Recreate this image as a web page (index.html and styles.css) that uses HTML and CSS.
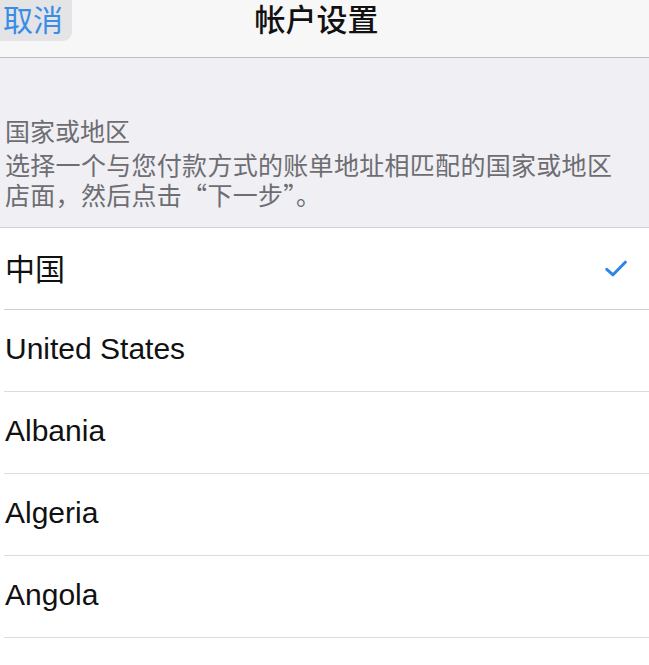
FILE: index.html
```html
<!DOCTYPE html>
<html lang="zh-CN">
<head>
  <meta charset="utf-8" />
  <title>帐户设置</title>
  <link rel="stylesheet" href="styles.css">
</head>
<body>
  <div id="main">
    <header class="nav-bar">
      <button class="nav-cancel">取消</button>
      <h1 class="nav-title">帐户设置</h1>
    </header>

    <section class="group-header">
      <div class="group-label">国家或地区</div>
      <p class="group-desc">选择一个与您付款方式的账单地址相匹配的国家或地区店面，然后点击“下一步”。</p>
    </section>

    <ul class="country-list">
      <li class="country selected">
        <div class="country-inner">
          <span class="country-name">中国</span>
          <svg class="check" width="22" height="17" viewBox="0 0 22 17">
            <path d="M1.8 9.3 L8 14.8 L20.3 2.2" fill="none" stroke="#2f84e6" stroke-width="3" stroke-linecap="round" stroke-linejoin="round"/>
          </svg>
        </div>
      </li>
      <li class="country"><div class="country-inner"><span class="country-name">United States</span></div></li>
      <li class="country"><div class="country-inner"><span class="country-name">Albania</span></div></li>
      <li class="country"><div class="country-inner"><span class="country-name">Algeria</span></div></li>
      <li class="country"><div class="country-inner"><span class="country-name">Angola</span></div></li>
      <li class="country"><div class="country-inner"><span class="country-name">Anguilla</span></div></li>
    </ul>
  </div>
</body>
</html>
```

FILE: styles.css
```css
html, body {
  margin: 0;
  padding: 0;
  background: #ffffff;
}
body {
  font-family: "Liberation Sans", "Noto Sans CJK SC", sans-serif;
  color: #111111;
  overflow: hidden;
}
#main {
  width: 649px;
}

/* top navigation */
.nav-bar {
  display: flex;
  align-items: flex-start;
  height: 57px;
  background: #f7f7f7;
  border-bottom: 1px solid #bdbdc0;
}
.nav-cancel {
  width: 72px;
  height: 41px;
  margin: 0;
  padding: 0 0 5px 3px;
  text-align: left;
  border: none;
  border-radius: 0 0 9px 0;
  background: #e4e4e6;
  color: #3a8de6;
  font-family: "Noto Sans CJK SC", sans-serif;
  font-size: 30px;
  line-height: 36px;
  outline: none;
}
.nav-title {
  flex: 1;
  margin: 0 88px 0 0;
  text-align: center;
  font-family: "Noto Sans CJK SC", sans-serif;
  font-size: 31px;
  font-weight: 500;
  line-height: 36px;
  color: #111111;
}

/* grey section header */
.group-header {
  background: #efeff4;
  padding: 57px 0 18px 5px;
  border-bottom: 1px solid #d2d2d6;
  color: #6d6d72;
  font-family: "Noto Sans CJK SC", sans-serif;
  font-size: 25px;
  line-height: 30px;
}
.group-label {
  margin: 0;
}
.group-desc {
  margin: 4px 0 0 0;
  padding-right: 20px;
  letter-spacing: 0.3px;
}

/* country rows */
.country-list {
  list-style: none;
  margin: 0;
  padding: 0;
}
.country {
  padding-left: 4px;
}
.country-inner {
  display: flex;
  align-items: center;
  justify-content: space-between;
  height: 78px;
  padding: 0 22px 3px 1px;
  border-bottom: 1px solid #dcdcdf;
  font-size: 30px;
}
.selected .country-inner {
  border-bottom-color: #cfcfd2;
}
.country-name {
  white-space: nowrap;
}
.check {
  display: block;
  margin-top: 3px;
}
```
